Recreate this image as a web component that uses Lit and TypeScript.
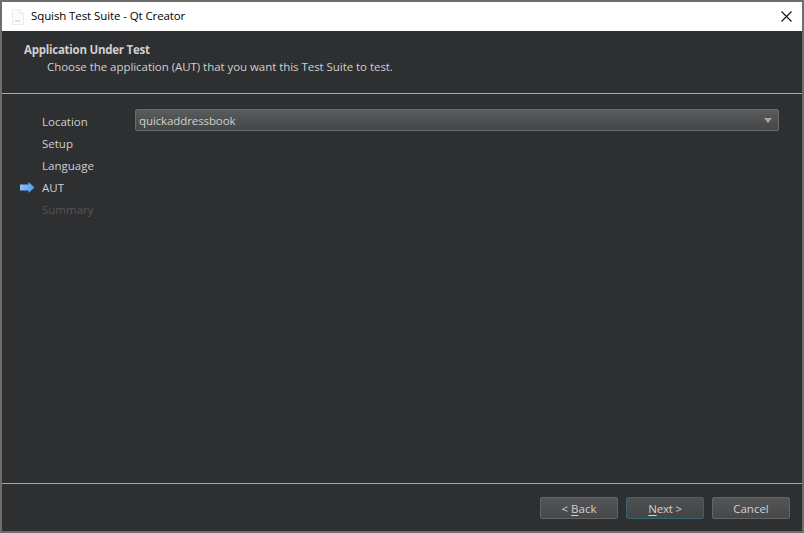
import { LitElement, html, css } from "lit";
import { customElement } from "lit/decorators.js";

@customElement("app-root")
export class AppRoot extends LitElement {
  static styles = css`
    :host { display: block; width: 804px; height: 533px; font-family: "Open Sans", "Noto Sans", sans-serif; font-size: 11.5px; }
    .win { box-sizing: border-box; width: 804px; height: 533px; border: 2px solid #6e6e6e; display: flex; flex-direction: column; background: #2e2f30; color: #d0d0d0; overflow: hidden; }
    .title { height: 29px; flex: none; background: #fff; color: #000; display: flex; align-items: center; padding: 0 10px 0 10px; gap: 7px; }
    .title .name { flex: 1; position: relative; top: -1px; letter-spacing: -0.1px; }
    .title svg { display: block; }
    .head { height: 63px; flex: none; box-sizing: border-box; padding: 10px 0 0 22px; border-bottom: 1px solid #a8a8a8; line-height: 18px; }
    .head .t { font-weight: 700; color: #d0d0d0; letter-spacing: -0.25px; }
    .head .s { padding-left: 23px; letter-spacing: -0.05px; line-height: 16px; }
    .main { flex: 1; display: flex; padding: 15px 23px 0 18px; }
    .steps { width: 115px; flex: none; display: flex; flex-direction: column; padding-top: 1px; }
    .step { height: 22px; display: flex; align-items: center; gap: 7px; }
    .step .ic { width: 15px; flex: none; display: flex; }
    .step.off { color: #555657; }
    .combo { flex: 1; height: 22px; box-sizing: border-box; border: 1px solid #6a6b6c; border-radius: 2px; background: linear-gradient(#5a5b5c, #454647); display: flex; align-items: center; justify-content: space-between; padding: 0 6px 0 3px; letter-spacing: -0.1px; }
    .arrow { width: 0; height: 0; border-left: 4px solid transparent; border-right: 4px solid transparent; border-top: 5px solid #a6a6a6; }
    .foot { height: 48px; flex: none; box-sizing: border-box; border-top: 1px solid #a8a8a8; display: flex; justify-content: flex-end; gap: 8px; padding: 13px 12px 0 0; }
    button { all: unset; box-sizing: border-box; width: 78px; height: 22px; border: 1px solid #626364; border-radius: 2px; background: linear-gradient(#545556, #464748); color: #d0d0d0; font: inherit; text-align: center; line-height: 19px; }
    button.def { border-color: #33686e; background: linear-gradient(#4d5051, #434648); letter-spacing: -0.2px; }
    u { text-underline-offset: 2px; }
  `;
  render() {
    const steps = ["Location", "Setup", "Language", "AUT", "Summary"];
    return html`<div class="win">
      <div class="title">
        <svg width="12" height="16" viewBox="0 0 12 16"><path d="M.5.5h7l4 4v11H.5z" fill="#fcfcfc" stroke="#ececec"/><path d="M7.500.5v4h4" fill="none" stroke="#ececec"/><path d="M3 11h5v2H3z" fill="#e2e2e2"/></svg>
        <span class="name">Squish Test Suite - Qt Creator</span>
        <svg width="11" height="11" viewBox="0 0 11 11"><path d="M.5.5l10 10M10.500.5l-10 10" stroke="#111" stroke-width="1.1" fill="none"/></svg>
      </div>
      <div class="head">
        <div class="t">Application Under Test</div>
        <div class="s">Choose the application (AUT) that you want this Test Suite to test.</div>
      </div>
      <div class="main">
        <div class="steps">
          ${steps.map((s, i) => html`<div class="step ${i === 4 ? "off" : ""}">
            <span class="ic">${i === 3 ? html`<svg width="15" height="11" viewBox="0 0 15 11"><defs><linearGradient id="g" x1="0" y1="0" x2="1" y2="0"><stop offset="0" stop-color="#8cc2f7"/><stop offset="1" stop-color="#4f9df0"/></linearGradient></defs><path d="M0 2.500h8.500V0l6 5.500-6 5.500V8.500H0z" fill="url(#g)"/></svg>` : ""}</span>
            <span>${s}</span></div>`)}
        </div>
        <div class="combo"><span>quickaddressbook</span><span class="arrow"></span></div>
      </div>
      <div class="foot">
        <button>&lt; <u>B</u>ack</button>
        <button class="def"><u>N</u>ext &gt;</button>
        <button>Cancel</button>
      </div>
    </div>`;
  }
}
